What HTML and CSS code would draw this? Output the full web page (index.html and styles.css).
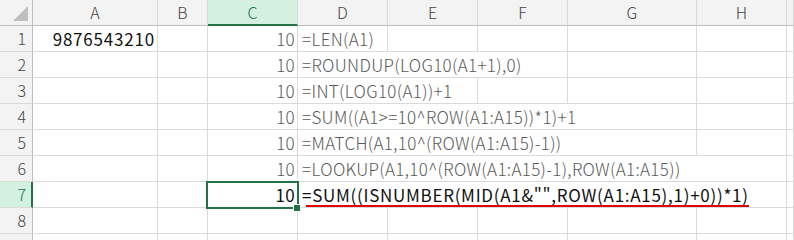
FILE: index.html
```html
<!DOCTYPE html>
<html lang="ja">
<head>
    <meta charset="UTF-8">
    <title>Sheet1</title>
    <link rel="stylesheet" href="styles.css">
</head>
<body>
    <div class="sheet">
        <!-- column headings -->
        <div class="hd corner">
            <svg width="16" height="16" viewBox="0 0 16 16"><polygon points="15,0 15,15 0,15" fill="#bfbfbf"/></svg>
        </div>
        <div class="hd col">A</div>
        <div class="hd col">B</div>
        <div class="hd col sel">C</div>
        <div class="hd col">D</div>
        <div class="hd col">E</div>
        <div class="hd col">F</div>
        <div class="hd col">G</div>
        <div class="hd col">H</div>
        <div class="hd col"></div>

        <!-- row 1 -->
        <div class="hd rowh">1</div>
        <div class="cell num dark big">9876543210</div>
        <div class="cell"></div>
        <div class="cell num">10</div>
        <div class="cell txt">=LEN(A1)</div>
        <div class="cell"></div>
        <div class="cell"></div>
        <div class="cell"></div>
        <div class="cell"></div>
        <div class="cell"></div>

        <!-- row 2 -->
        <div class="hd rowh">2</div>
        <div class="cell"></div>
        <div class="cell"></div>
        <div class="cell num">10</div>
        <div class="cell txt span3">=ROUNDUP(LOG10(A1+1),0)</div>
        <div class="cell"></div>
        <div class="cell"></div>
        <div class="cell"></div>

        <!-- row 3 -->
        <div class="hd rowh">3</div>
        <div class="cell"></div>
        <div class="cell"></div>
        <div class="cell num">10</div>
        <div class="cell txt span2">=INT(LOG10(A1))+1</div>
        <div class="cell"></div>
        <div class="cell"></div>
        <div class="cell"></div>
        <div class="cell"></div>

        <!-- row 4 -->
        <div class="hd rowh">4</div>
        <div class="cell"></div>
        <div class="cell"></div>
        <div class="cell num">10</div>
        <div class="cell txt span4">=SUM((A1&gt;=10^ROW(A1:A15))*1)+1</div>
        <div class="cell"></div>
        <div class="cell"></div>

        <!-- row 5 -->
        <div class="hd rowh">5</div>
        <div class="cell"></div>
        <div class="cell"></div>
        <div class="cell num">10</div>
        <div class="cell txt span4">=MATCH(A1,10^(ROW(A1:A15)-1))</div>
        <div class="cell"></div>
        <div class="cell"></div>

        <!-- row 6 -->
        <div class="hd rowh">6</div>
        <div class="cell"></div>
        <div class="cell"></div>
        <div class="cell num">10</div>
        <div class="cell txt span5">=LOOKUP(A1,10^(ROW(A1:A15)-1),ROW(A1:A15))</div>
        <div class="cell"></div>

        <!-- row 7 -->
        <div class="hd rowh sel">7</div>
        <div class="cell"></div>
        <div class="cell"></div>
        <div class="cell num dark active">10<span class="handle"></span></div>
        <div class="cell txt dark wide span5"><span class="mark">=SUM((ISNUMBER(MID(A1&amp;"",ROW(A1:A15),1)+0))*1)</span></div>
        <div class="cell"></div>

        <!-- row 8 -->
        <div class="hd rowh">8</div>
        <div class="cell"></div>
        <div class="cell"></div>
        <div class="cell"></div>
        <div class="cell"></div>
        <div class="cell"></div>
        <div class="cell"></div>
        <div class="cell"></div>
        <div class="cell"></div>
        <div class="cell"></div>

        <!-- row 9 (only its top edge is in view) -->
        <div class="hd rowh"></div>
        <div class="cell"></div>
        <div class="cell"></div>
        <div class="cell"></div>
        <div class="cell"></div>
        <div class="cell"></div>
        <div class="cell"></div>
        <div class="cell"></div>
        <div class="cell"></div>
        <div class="cell"></div>
    </div>
</body>
</html>
```

FILE: styles.css
```css
body {
    margin: 0;
    background: #fff;
    font-family: "Noto Sans CJK JP", "Noto Sans", sans-serif;
    font-size: 16px;
    overflow: hidden;
}
.sheet {
    display: grid;
    grid-template-columns: 33px 125px 50px 90px 90px 90px 90px 129px 90px 1fr;
    grid-auto-rows: 26px;
    width: 794px;
}
.hd, .cell {
    box-sizing: border-box;
    border-right: 1px solid #dadada;
    border-bottom: 1px solid #dadada;
    line-height: 25px;
    white-space: nowrap;
}
.hd {
    background: #f3f3f3;
    color: #444;
    font-weight: 300;
}
.col {
    text-align: center;
    border-bottom: 1px solid #bdbdbd;
}
.corner {
    border-right: 1px solid #bdbdbd;
    border-bottom: 1px solid #bdbdbd;
    display: flex;
    align-items: flex-end;
    justify-content: flex-end;
    padding: 0 3px 3px 0;
}
.corner svg {
    display: block;
}
.rowh {
    text-align: right;
    padding-right: 6px;
    border-right: 1px solid #bdbdbd;
}
.col.sel {
    background: #d3f0e0;
    color: #217346;
    border-bottom: 2px solid #217346;
}
.rowh.sel {
    background: #d3f0e0;
    color: #217346;
    border-right: 2px solid #217346;
    padding-right: 5px;
}
.cell {
    color: #5a5a5a;
    font-size: 17px;
    font-weight: 300;
    letter-spacing: 0.33px;
}
.num {
    text-align: right;
    padding-right: 2px;
    letter-spacing: 0.3px;
}
.txt {
    padding-left: 4px;
}
.dark {
    color: #111;
    font-weight: 400;
}
.big {
    letter-spacing: 0.8px;
}
.wide {
    letter-spacing: 0.72px;
}
.span2 { grid-column: span 2; }
.span3 { grid-column: span 3; }
.span4 { grid-column: span 4; }
.span5 { grid-column: span 5; }
.active {
    position: relative;
}
.active::after {
    content: "";
    position: absolute;
    top: -1px;
    left: -2px;
    right: -2px;
    bottom: -2px;
    border: 2px solid #217346;
}
.handle {
    position: absolute;
    right: -4px;
    bottom: -5px;
    width: 6px;
    height: 6px;
    background: #217346;
    border: 1px solid #fff;
    z-index: 1;
}
.mark {
    position: relative;
}
.mark::after {
    content: "";
    position: absolute;
    left: 4px;
    right: 0;
    bottom: 0;
    height: 2px;
    background: #e00000;
}
```
